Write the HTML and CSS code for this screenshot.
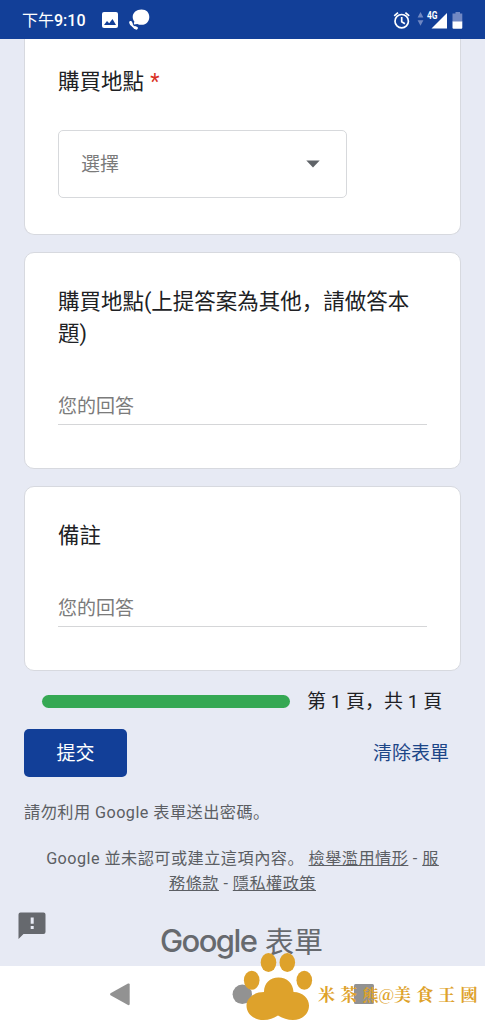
FILE: index.html
```html
<!DOCTYPE html>
<html lang="zh-Hans">
<head>
<meta charset="utf-8">
<title>Google 表單</title>
<link rel="stylesheet" href="styles.css">
</head>
<body>
<div class="screen">
  <header class="status">
    <span class="clock">下午<b>9:10</b></span>
    <svg class="photo" width="16" height="16" viewBox="0 0 16 16"><rect width="16" height="16" rx="2" fill="#fff"/><path d="M2 13 5 9l2.200 2.300L10.500 7 14 13z" fill="#123f98"/></svg>
    <svg class="chat" width="22" height="22" viewBox="0 0 22 22"><path d="M12.500.500C17.500.500 20.300 3.700 20.300 7.900S17.500 15.800 12.500 15.800C11 15.800 9.500 15.500 8.300 14.900L4.800 15.500 5.300 12.300C4.200 11 3.700 9.500 3.700 7.900 3.700 3.700 7.500.500 12.500.500z" fill="#fff"/><path d="M1.700 13.700Q3 17.800 7.500 19.200" fill="none" stroke="#fff" stroke-width="2"/><path d="M1.700 13.500l.6 1.500M6.200 18.700l1.200.4" fill="none" stroke="#fff" stroke-width="3" stroke-linecap="round"/></svg>
    <span class="grow"></span>
    <svg width="73" height="24" viewBox="392 7 73 24">
      <g fill="none" stroke="#fff" stroke-width="1.700"><circle cx="401.700" cy="20.200" r="6.700"/><path d="M401.700 16v4.700l3.200 2M394.200 14.800l3.800-3.200M409.200 14.800l-3.800-3.200"/></g>
      <path d="M420.500 11l2.900 5.500h-5.800zM420.500 24.700l2.900-5.500h-5.800z" fill="#6f87c2"/>
      <path d="M447 12v15.500h-15.500z" fill="#fff"/>
      <text x="427" y="18.300" class="net" textLength="10.500" lengthAdjust="spacingAndGlyphs">4G</text>
      <path d="M455.500 11h4.500v1.500h2.300v8.500h-9.800v-8.500h3z" fill="#7188c3"/><path d="M452.500 20.500h9.800v6.200q0 1-1 1h-7.800q-1 0-1-1z" fill="#fff"/>
    </svg>
  </header>

  <main class="form">
    <section class="card place">
      <h2>購買地點 <span class="req">*</span></h2>
      <div class="select"><span>選擇</span><svg width="14" height="8" viewBox="0 0 14 8"><path d="M.3.500h13.400L7 7.500z" fill="#5f6368"/></svg></div>
    </section>
    <section class="card other">
      <h2>購買地點(上提答案為其他，請做答本題)</h2>
      <div class="answer">您的回答</div>
    </section>
    <section class="card note">
      <h2>備註</h2>
      <div class="answer">您的回答</div>
    </section>
    <div class="progress"><div class="bar"></div><span>第 1 頁，共 1 頁</span></div>
    <div class="actions"><button class="submit">提交</button><a class="clear">清除表單</a></div>
    <p class="warn">請勿利用 Google 表單送出密碼。</p>
    <p class="legal">Google 並未認可或建立這項內容。 <u>檢舉濫用情形</u> - <u>服<br>務條款</u> - <u>隱私權政策</u></p>
    <div class="brand">
      <svg class="report" width="28" height="28" viewBox="0 0 28 28"><path d="M2.500.500h23Q27.500.500 27.500 2.500v17.500Q27.500 22 25.500 22H5.500L.5 27V2.500Q.5.500 2.500.500z" fill="#66696e"/><path d="M12.700 5.500h3v6.200h-3zM12.700 14h3v3h-3z" fill="#e7eaf4"/></svg>
      <div class="logo"><b>Google</b><span>表單</span></div>
    </div>
  </main>

  <nav class="nav">
    <svg width="485" height="58" viewBox="0 966 485 58">
      <g fill="#929292"><path d="M110.500 993.200 128 983.500Q129.700 983 129.700 984.500v19.500Q129.700 1005.500 128 1005L110.500 995.300Q109.500 994.300 110.500 993.200z"/><circle cx="242.300" cy="994.300" r="9.700"/><rect x="354" y="984" width="20" height="20" rx="1.500"/></g>
    </svg>
  </nav>

  <div class="watermark">
    <svg width="70" height="70" viewBox="243 952 70 70"><g fill="#dea22b"><ellipse cx="251.700" cy="980.200" rx="7.800" ry="9.500"/><ellipse cx="268.500" cy="962.500" rx="7.800" ry="9.500"/><ellipse cx="287.300" cy="962.500" rx="7.800" ry="9.500"/><ellipse cx="304.300" cy="980.200" rx="7.800" ry="9.500"/><path d="M264 992C264 983 270 977.500 278.500 977.500S293 983 293.500 992C303 992 309 998.500 309 1005.500 309 1014 302 1020 293 1020 287 1020 282 1018 278 1015.500 274 1018 270 1020 263.500 1020 254 1020 246.500 1014 246.500 1005.500 246.500 998 254 992 264 992z"/></g></svg>
    <span class="mark">米茶<span class="tight">熊@</span>美食王國</span>
  </div>
</div>
</body>
</html>
```
FILE: styles.css
```css
* { box-sizing: border-box; }
body { margin: 0; }
.screen {
  position: relative;
  width: 485px;
  height: 1024px;
  overflow: hidden;
  display: flex;
  flex-direction: column;
  background: #e7eaf4;
  color: #202124;
  font-family: Roboto, "Noto Sans CJK SC", sans-serif;
}
.status {
  height: 39px;
  flex: none;
  display: flex;
  align-items: center;
  padding: 1px 20px 0 22px;
  background: #123f98;
  color: #fff;
}
.clock { font-size: 16px; line-height: 24px; width: 80px; padding-top: 1px; white-space: nowrap; }
.clock b { font-weight: 500; }
.chat { margin-left: 11px; }
.grow { flex: 1; }
.net { font: 700 10px Roboto, sans-serif; fill: #fff; }
.form { height: 927px; flex: none; padding: 0 24px; }
.card {
  background: #fff;
  border: 1px solid #d7d9df;
  border-radius: 10px;
  padding: 33px 33px 0;
  margin-bottom: 17px;
}
.card h2 { margin: 0; font-size: 21.5px; font-weight: 400; line-height: 32px; }
.card .req { color: #d93025; margin-left: 1px; }
.place { height: 196px; border-top: 0; border-radius: 0 0 10px 10px; padding-top: 27px; }
.other { height: 217px; }
.note { height: 185px; margin-bottom: 16px; }
.select {
  width: 289px;
  height: 68px;
  margin-top: 32px;
  border: 1px solid #d7d9dc;
  border-radius: 5px;
  padding: 0 26px 0 22px;
  display: flex;
  align-items: center;
  justify-content: space-between;
  font-size: 19px;
  color: #7b7b7b;
}
.select span { margin-top: -3px; }
.answer {
  height: 34px;
  margin-top: 41px;
  padding-top: 2px;
  width: 369px;
  border-bottom: 1px solid #d5d6d8;
  font-size: 19px;
  line-height: 28px;
  color: #7b7b7b;
}
.progress {
  height: 28px;
  padding-left: 18px;
  display: flex;
  align-items: center;
  gap: 17px;
  font-size: 19px;
  white-space: nowrap;
}
.progress span { margin-top: -4px; }
.bar { width: 248px; height: 13px; border-radius: 7px; background: #35a853; }
.actions {
  height: 49px;
  margin-top: 13px;
  display: flex;
  align-items: center;
  justify-content: space-between;
  padding-right: 12px;
}
.submit {
  width: 103px;
  height: 48px;
  border: 0;
  border-radius: 5px;
  padding: 0 0 3px;
  background: #123f98;
  color: #fff;
  font: 400 19px Roboto, "Noto Sans CJK SC", sans-serif;
}
.clear { font-size: 19px; color: #1c4587; margin-top: -3px; }
.warn, .legal { margin: 0; font-size: 16.2px; letter-spacing: .45px; color: #5b5e63; line-height: 24px; }
.warn { margin-top: 24px; }
.legal { margin-top: 21px; line-height: 25px; text-align: center; white-space: nowrap; }
.brand { display: flex; margin: 15px 0 0 -6px; }
.report { margin-top: 1px; }
.logo { display: flex; align-items: center; margin: 9px 0 0 113px; height: 40px; color: #66696e; white-space: nowrap; }
.logo b { width: 106px; padding-left: 1px; font: 500 31px Inter, sans-serif; letter-spacing: -1.600px; }
.logo span { font-size: 29px; }
.nav { height: 58px; flex: none; background: #fff; }
.nav svg { display: block; }
.watermark {
  position: absolute;
  left: 243px;
  top: 952px;
  display: flex;
  align-items: center;
  color: #dea22b;
}
.mark {
  margin: 12px 0 0 5px;
  font: 700 17px "AR PL UKai TW", "Noto Serif CJK TC", "Noto Sans CJK TC", serif;
  letter-spacing: 5.200px;
  white-space: nowrap;
}
.mark .tight { letter-spacing: 0; font-size: 16px; }
```
